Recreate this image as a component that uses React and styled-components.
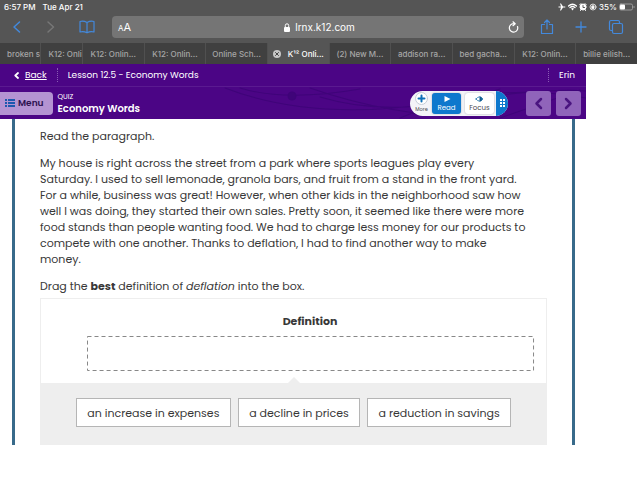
import React from 'react'
import styled, { createGlobalStyle, css } from 'styled-components'

/******************************************************************************/
// Data
/******************************************************************************/

const TABS = [
  { title: 'broken se', narrow: true },
  { title: 'K12: Onli', narrow: true },
  { title: 'K12: Onlin...' },
  { title: 'K12: Onlin...' },
  { title: 'Online Sch...' },
  { title: 'K¹² Onli...', active: true },
  { title: '(2) New M...' },
  { title: 'addison ra...' },
  { title: 'bed gacha...' },
  { title: 'K12: Onlin...' },
  { title: 'billie eilish...' }
]

const PARAGRAPH = [
  'My house is right across the street from a park where sports leagues play every',
  'Saturday. I used to sell lemonade, granola bars, and fruit from a stand in the front yard.',
  'For a while, business was great! However, when other kids in the neighborhood saw how',
  'well I was doing, they started their own sales. Pretty soon, it seemed like there were more',
  'food stands than people wanting food. We had to charge less money for our products to',
  'compete with one another. Thanks to deflation, I had to find another way to make',
  'money.'
]

const CHOICES = [
  'an increase in expenses',
  'a decline in prices',
  'a reduction in savings'
]

const UI_FONT = 'Inter, "Liberation Sans", sans-serif'
const PAGE_FONT = 'Poppins, Inter, "Liberation Sans", sans-serif'

/******************************************************************************/
// Base
/******************************************************************************/

const GlobalStyle = createGlobalStyle`
  * {
    box-sizing: border-box;
  }

  body {
    margin: 0;
    background: #fff;
    font-family: ${UI_FONT};
  }

  button {
    margin: 0;
    padding: 0;
    border: 0;
    background: none;
    color: inherit;
    font: inherit;
  }

  svg {
    display: block;
    flex: none;
  }
`

const Icon = styled.svg.attrs({ 'aria-hidden': true })`
  fill: none;
  stroke: currentColor;
  stroke-linecap: round;
  stroke-linejoin: round;
`

/******************************************************************************/
// Browser
/******************************************************************************/

const Browser = styled.header`
  background: #555;
  color: #fff;
`

const StatusBar = styled.div`
  display: flex;
  align-items: center;
  gap: 7px;
  height: 13px;
  padding: 0 2px 0 4px;
  font-size: 8px;
  font-weight: 500;
`

const StatusIcons = styled.div`
  display: flex;
  align-items: center;
  gap: 2px;
  margin-left: auto;
`

const Toolbar = styled.div`
  display: flex;
  align-items: center;
  gap: 20px;
  height: 28px;
  padding: 0 15px 0 10px;
`

const ToolButton = styled.button`
  display: grid;
  place-items: center;
  width: ${p => p.$wide ? '18px' : '14px'};
  height: 20px;
  color: ${p => p.$muted ? '#777' : '#4389dc'};
`

const Address = styled.div`
  display: flex;
  align-items: center;
  flex: 1;
  height: 22px;
  margin: 0 -4px;
  padding: 0 5px 0 6px;
  border-radius: 4px;
  background: #757575;
`

const TextSize = styled.button`
  font-size: 11px;

  small {
    font-size: 8px;
  }
`

const AddressText = styled.div`
  display: flex;
  flex: 1;
  align-items: center;
  justify-content: center;
  gap: 5px;
  font-size: 10px;
`

const TabStrip = styled.nav`
  display: flex;
  height: 21px;
  margin-top: 2px;
  background: #404040;
`

const Tab = styled.button`
  display: flex;
  align-items: center;
  justify-content: center;
  gap: 7px;
  flex: ${p => p.$narrow ? '2 1 0' : '3 1 0'};
  min-width: 0;
  overflow: hidden;
  white-space: nowrap;
  border-left: 1px solid #505050;
  color: #a6a6a6;
  font-size: 8px;
  font-weight: 500;

  ${p => p.$narrow && css`
    justify-content: flex-start;
    text-indent: 7px;
  `}

  ${p => p.$active && css`
    background: #555;
    color: #fff;
  `}

  &:first-child {
    border-left: 0;
  }
`

/******************************************************************************/
// Lesson Header
/******************************************************************************/

const Lesson = styled.div`
  width: 92%;
  font-family: ${PAGE_FONT};
`

const Crumbs = styled.nav`
  display: flex;
  align-items: center;
  height: 23px;
  padding: 0 11px 0 14px;
  border-bottom: 1px solid #5a1a90;
  background: #4b0585;
  color: #fff;
  font-size: 9px;
`

const BackLink = styled.a`
  display: flex;
  align-items: center;
  gap: 6px;
  color: inherit;
  text-decoration: none;

  span {
    text-decoration: underline;
  }
`

const Divider = styled.span`
  height: 14px;
  margin: 0 10px;
  border-left: 1px dotted #8a5cb4;
`

const User = styled.span`
  display: flex;
  align-items: center;
  margin-left: auto;
`

const QuizBar = styled.div`
  position: relative;
  display: flex;
  align-items: center;
  height: 32px;
  padding-right: 5px;
  background: #4b0585;
  color: #fff;
`

const Swirls = styled(Icon)`
  position: absolute;
  top: 0;
  right: 0;
  width: 100%;
  height: 100%;
  color: #3f0479;
`

const MenuButton = styled.button`
  position: relative;
  display: flex;
  align-items: center;
  gap: 3px;
  height: 23px;
  padding: 0 9px 0 5px;
  border-radius: 0 4px 4px 0;
  background: #b493d2;
  color: #2c1150;
  font-size: 9px;
  font-weight: 600;
`

const QuizTitle = styled.div`
  position: relative;
  flex: 1;
  margin-left: 5px;
  padding-top: 1px;

  small {
    display: block;
    font-size: 7px;
    line-height: 10px;
  }

  h1 {
    margin: 0;
    font-size: 10px;
    font-weight: 600;
    line-height: 14px;
  }
`

const ReadTools = styled.div`
  position: relative;
  display: flex;
  align-items: center;
  gap: 4px;
  height: 25px;
  margin-right: 13px;
  padding-left: 5px;
  overflow: hidden;
  border-radius: 13px;
  background: #f4f4f8;
`

const ReadButton = styled.button`
  display: flex;
  flex-direction: column;
  align-items: center;
  justify-content: center;
  gap: 1px;
  width: ${p => p.$round ? '13px' : '29px'};
  height: 21px;
  border-radius: 3px;
  background: ${p => p.$active ? '#0e78cd' : p.$round ? 'none' : '#fff'};
  box-shadow: ${p => p.$round ? 'none' : '0 0 2px #a8a8b4'};
  color: ${p => p.$active ? '#fff' : '#4a4c54'};
  font-size: ${p => p.$round ? '5px' : '7px'};
  line-height: 8px;
`

const Grip = styled.button`
  display: grid;
  place-items: center;
  width: 12px;
  height: 25px;
  margin-left: -2px;
  background: #0e78cd;
  color: #fff;
`

const Pager = styled.button`
  position: relative;
  display: grid;
  place-items: center;
  width: 25px;
  height: 25px;
  margin-left: 5px;
  border-radius: 3px;
  background: #9064ba;
  color: #4a1580;
`

/******************************************************************************/
// Question
/******************************************************************************/

const Question = styled.main`
  margin: 0 11px 0 12px;
  padding: 9px 25px 0 25px;
  border: solid #386a8a;
  border-width: 0 3px;
  color: #383838;
  font-size: 11px;
  line-height: 16px;

  p {
    margin: 0 0 11px;
    white-space: nowrap;
  }
`

const Activity = styled.section`
  margin-top: -7px;
  border: 1px solid #eee;
`

const DropArea = styled.div`
  padding: 14px 13px 12px 46px;

  h2 {
    margin: 0 0 7px;
    font-size: 11px;
    font-weight: 700;
    line-height: 16px;
    text-align: center;
  }
`

const DropBox = styled.svg`
  width: 100%;
  height: 35px;
  overflow: visible;
`

const Choices = styled.div`
  position: relative;
  display: flex;
  gap: 7px;
  padding: 15px 35px 17px;
  background: #eee;

  &::before {
    content: '';
    position: absolute;
    left: 50%;
    bottom: 100%;
    transform: translateX(-50%);
    border: 6px solid transparent;
    border-top-width: 0;
    border-bottom-color: #eee;
  }
`

const Choice = styled.button`
  flex: 1 1 auto;
  height: 29px;
  border: 1px solid #b5b5b5;
  background: #fff;
  white-space: nowrap;
`

/******************************************************************************/
// Sections
/******************************************************************************/

const Status = () => <StatusBar>
  <span>6:57 PM</span>
  <span>Tue Apr 21</span>
  <StatusIcons>
    <Icon width='8' height='8' viewBox='0 0 16 16'>
      <path d='M1 7h5L4 1h2l4 6h4q2 1 0 2h-4l-4 6H4l2-6H1z' fill='currentColor' stroke='none'/>
    </Icon>
    <Icon width='9' height='8' viewBox='0 0 18 16' strokeWidth='2.5'>
      <path d='M1 6q8-7 16 0M4 9q5-4 10 0'/>
      <path d='M6 11q3-2 6 0l-3 4z' fill='currentColor' stroke='none'/>
    </Icon>
    <Icon width='8' height='8' viewBox='0 0 16 16' strokeWidth='2'>
      <circle cx='8' cy='8' r='6' fill='currentColor'/>
      <path d='M1 4l3-3M12 1l3 3M4 13l-1 2M12 13l1 2'/>
      <path d='M8 5v4h3' stroke='#555'/>
    </Icon>
    <Icon width='8' height='8' viewBox='0 0 16 16' strokeWidth='1.5'>
      <circle cx='8' cy='8' r='6'/>
      <rect x='6' y='7' width='4' height='4' fill='currentColor'/>
      <path d='M6 7V5q2-2 4 0v2'/>
    </Icon>
    <span>35%</span>
    <Icon width='16' height='8' viewBox='0 0 16 8'>
      <rect x='.5' y='1' width='13' height='6' rx='1.5' stroke='#999'/>
      <rect x='1' y='1.5' width='5' height='5' rx='1' fill='currentColor' stroke='none'/>
      <path d='M15 3.5v1' stroke='#999'/>
    </Icon>
  </StatusIcons>
</StatusBar>

const BrowserTools = () => <Toolbar>
  <ToolButton aria-label='Previous page'>
    <Icon width='10' height='14' viewBox='0 0 10 14' strokeWidth='1.5'>
      <path d='M7.500 2L2 7l5.500 5'/>
    </Icon>
  </ToolButton>
  <ToolButton $muted aria-label='Next page'>
    <Icon width='10' height='14' viewBox='0 0 10 14' strokeWidth='1.5'>
      <path d='M2 2l5.500 5L2 12'/>
    </Icon>
  </ToolButton>
  <ToolButton $wide aria-label='Bookmarks'>
    <Icon width='16' height='14' viewBox='0 0 16 14' strokeWidth='1.2'>
      <path d='M8 2.500Q4.500 .5 1 1.500v10.500q3.500-1 7 .8 3.500-1.800 7-.8V1.500Q11.500 .5 8 2.500zM8 3v9'/>
    </Icon>
  </ToolButton>
  <Address>
    <TextSize aria-label='Text size'><small>A</small>A</TextSize>
    <AddressText>
      <Icon width='6' height='9' viewBox='0 0 6 9'>
        <rect y='4' width='6' height='5' rx='1' fill='currentColor' stroke='none'/>
        <path d='M1.300 4V2.500a1.700 1.700 0 0 1 3.400 0V4'/>
      </Icon>
      <span>lrnx.k12.com</span>
    </AddressText>
    <button aria-label='Reload'>
      <Icon width='11' height='12' viewBox='0 0 11 12' strokeWidth='1.2'>
        <path d='M9.500 5.500A4.200 4.200 0 1 1 5.500 2.700h1.500M5 .8l2.200 1.900L5 4.700'/>
      </Icon>
    </button>
  </Address>
  <ToolButton aria-label='Share'>
    <Icon width='14' height='16' viewBox='0 0 14 16' strokeWidth='1.2'>
      <path d='M4.500 5.500h-3v9h11v-9h-3M7 10V1M4.500 3.500L7 1l2.500 2.500'/>
    </Icon>
  </ToolButton>
  <ToolButton aria-label='New tab'>
    <Icon width='12' height='12' viewBox='0 0 12 12' strokeWidth='1.3'>
      <path d='M6 1v10M1 6h10'/>
    </Icon>
  </ToolButton>
  <ToolButton aria-label='All tabs'>
    <Icon width='16' height='16' viewBox='0 0 16 16' strokeWidth='1.2'>
      <rect x='4.500' y='4.500' width='10' height='10' rx='1.500'/>
      <path d='M4 11.500H3Q1.500 11.500 1.500 10V3Q1.500 1.500 3 1.500h7q1.500 0 1.500 1.500v1'/>
    </Icon>
  </ToolButton>
</Toolbar>

const Tabs = () => <TabStrip>
  {TABS.map(({ title, narrow, active }, i) =>
    <Tab key={i} $narrow={narrow} $active={active}>
      {active && <Icon width='8' height='8' viewBox='0 0 8 8'>
        <circle cx='4' cy='4' r='4' fill='#c8c8c8' stroke='none'/>
        <path d='M2.500 2.500l3 3m0-3l-3 3' stroke='#444'/>
      </Icon>}
      {title}
    </Tab>
  )}
</TabStrip>

const LessonHeader = () => <header>
  <Crumbs>
    <BackLink href='#back'>
      <Icon width='5' height='7' viewBox='0 0 5 7' strokeWidth='1.8'>
        <path d='M4 1L1.300 3.500 4 6'/>
      </Icon>
      <span>Back</span>
    </BackLink>
    <Divider/>
    <span>Lesson 12.5 - Economy Words</span>
    <User><Divider/>Erin</User>
  </Crumbs>
  <QuizBar>
    <Swirls viewBox='0 0 586 32' preserveAspectRatio='none'>
      <path d='M225 1Q310 34 430 17T586 4M240 1q45 14 120 1M310 1q80 28 170 30M320 10q80 24 180-8M400 31q90-38 186-20M500 31l80-28'/>
      <circle cx='292' cy='9' r='4' fill='currentColor'/>
    </Swirls>
    <MenuButton>
      <Icon width='10' height='8' viewBox='0 0 10 8' strokeWidth='2'>
        <path d='M0 1h2m1 0h7M0 4h2m1 0h7M0 7h2m1 0h7' stroke='#1d58ae' strokeLinecap='butt'/>
      </Icon>
      Menu
    </MenuButton>
    <QuizTitle>
      <small>QUIZ</small>
      <h1>Economy Words</h1>
    </QuizTitle>
    <ReadTools>
      <ReadButton $round>
        <Icon width='13' height='13' viewBox='0 0 13 13'>
          <circle cx='6.500' cy='6.500' r='6' fill='#fff' stroke='#c5cdd8'/>
          <path d='M6.500 3.500v6m-3-3h6' stroke='#0e70b8' strokeWidth='2'/>
        </Icon>
        More
      </ReadButton>
      <ReadButton $active>
        <Icon width='8' height='8' viewBox='0 0 8 8'>
          <path d='M1.500 1l6 3-6 3z' fill='currentColor' stroke='none'/>
        </Icon>
        Read
      </ReadButton>
      <ReadButton>
        <Icon width='9' height='8' viewBox='0 0 9 8'>
          <path d='M1 4q3.500-4.500 7 0-3.500 4.500-7 0z' stroke='#3b87b8'/>
          <path d='M4.500 1.500a2.500 2.500 0 0 1 0 5z' fill='#125d91' stroke='none'/>
        </Icon>
        Focus
      </ReadButton>
      <Grip aria-label='Move toolbar'>
        <Icon width='5' height='8' viewBox='0 0 5 8'>
          <path d='M0 0h2v2H0zM3 0h2v2H3zM0 3h2v2H0zM3 3h2v2H3zM0 6h2v2H0zM3 6h2v2H3z' fill='currentColor' stroke='none'/>
        </Icon>
      </Grip>
    </ReadTools>
    <Pager aria-label='Previous question'>
      <Icon width='9' height='13' viewBox='0 0 9 13' strokeWidth='2.500'>
        <path d='M7 2L2.500 6.500 7 11'/>
      </Icon>
    </Pager>
    <Pager aria-label='Next question'>
      <Icon width='9' height='13' viewBox='0 0 9 13' strokeWidth='2.500'>
        <path d='M2 2l4.500 4.500L2 11'/>
      </Icon>
    </Pager>
  </QuizBar>
</header>

/******************************************************************************/
// Main Component
/******************************************************************************/

const App = () => <>
  <GlobalStyle/>
  <Browser>
    <Status/>
    <BrowserTools/>
    <Tabs/>
  </Browser>
  <Lesson>
    <LessonHeader/>
    <Question>
      <p>Read the paragraph.</p>
      <p>
        {PARAGRAPH.map(line => <React.Fragment key={line}>{line}<br/></React.Fragment>)}
      </p>
      <p>Drag the <b>best</b> definition of <em>deflation</em> into the box.</p>
      <Activity>
        <DropArea>
          <h2>Definition</h2>
          <DropBox aria-label='Definition drop box'>
            <rect x='0.500' y='0.500' width='100%' height='34' fill='none' stroke='#888' strokeDasharray='4 3'/>
          </DropBox>
        </DropArea>
        <Choices>
          {CHOICES.map(choice => <Choice key={choice}>{choice}</Choice>)}
        </Choices>
      </Activity>
    </Question>
  </Lesson>
</>

/******************************************************************************/
// Exports
/******************************************************************************/

export default App
